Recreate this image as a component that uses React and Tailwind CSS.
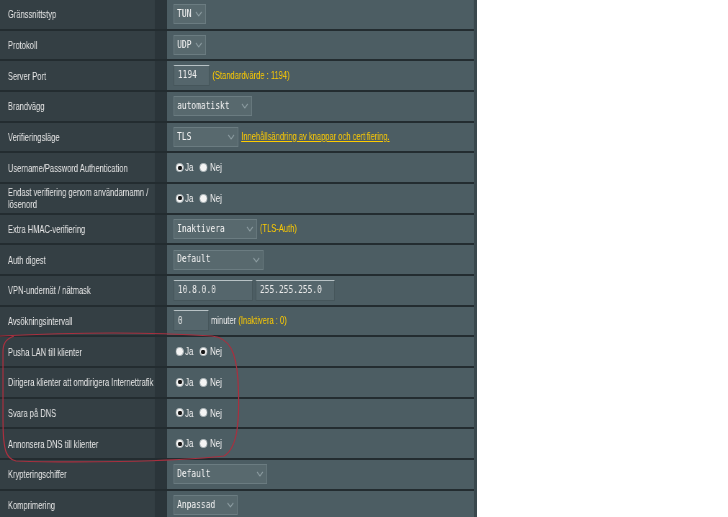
import React from "react";

function Chevron() {
  return (
    <svg width="10" height="6" viewBox="0 0 10 6" className="shrink-0">
      <path d="M1 1 L5 5 L9 1" fill="none" stroke="#8e9ea3" strokeWidth="1.2" />
    </svg>
  );
}

function Select({ className, children }) {
  return (
    <div
      className={
        "h-[20px] flex items-center justify-between pl-[4px] pr-[4px] bg-[#58696e] border border-[#6b7c81] text-[#f4f4f4] text-[11px] font-['DejaVu_Sans_Mono',monospace] " +
        className
      }
    >
      <span>{children}</span>
      <Chevron />
    </div>
  );
}

function Input({ className, children }) {
  return (
    <div
      className={
        "h-[21px] flex items-center pl-[5px] bg-[#55666c] border border-[#46565b] border-t-[#b8c2c5] text-[#ececec] text-[11px] font-['DejaVu_Sans_Mono',monospace] " +
        className
      }
    >
      {children}
    </div>
  );
}

function Hint({ children, className = "" }) {
  return <span className={"text-[10.5px] text-[#ffcc00] " + className}>{children}</span>;
}

function Radio({ checked }) {
  return (
    <span className="inline-flex w-[11px] h-[9px] rounded-full bg-[#f4f4f4] border border-[#a9b3b6] items-center justify-center">
      {checked && <span className="w-[6px] h-[4px] rounded-full bg-[#151515]" />}
    </span>
  );
}

function Radios({ ja }) {
  return (
    <div className="flex items-center ml-[3px] text-[11px] text-[#f0f0f0]">
      <Radio checked={ja} />
      <span className="ml-[2px]">Ja</span>
      <span className="ml-[8px] flex items-center">
        <Radio checked={!ja} />
      </span>
      <span className="ml-[4px]">Nej</span>
    </div>
  );
}

const rows = [
  { label: "Gränssnittstyp", content: <Select className="w-[45px]">TUN</Select> },
  { label: "Protokoll", content: <Select className="w-[45px]">UDP</Select> },
  {
    label: "Server Port",
    content: (
      <>
        <Input className="w-[50px]">1194</Input>
        <Hint className="ml-[4px]">(Standardvärde : 1194)</Hint>
      </>
    ),
  },
  { label: "Brandvägg", content: <Select className="w-[109px]">automatiskt</Select> },
  {
    label: "Verifieringsläge",
    content: (
      <>
        <Select className="w-[90px]">TLS</Select>
        <Hint className="ml-[4px] underline">Innehållsändring av knappar och certifiering.</Hint>
      </>
    ),
  },
  { label: "Username/Password Authentication", content: <Radios ja /> },
  { label: "Endast verifiering genom användarnamn / lösenord", content: <Radios ja /> },
  {
    label: "Extra HMAC-verifiering",
    content: (
      <>
        <Select className="w-[116px]">Inaktivera</Select>
        <Hint className="ml-[4px]">(TLS-Auth)</Hint>
      </>
    ),
  },
  { label: "Auth digest", content: <Select className="w-[125px]">Default</Select> },
  {
    label: "VPN-undernät / nätmask",
    content: (
      <>
        <Input className="w-[110px]">10.8.0.0</Input>
        <Input className="w-[110px] ml-[4px]">255.255.255.0</Input>
      </>
    ),
  },
  {
    label: "Avsökningsintervall",
    content: (
      <>
        <Input className="w-[49px]">0</Input>
        <span className="ml-[3px] text-[10.5px] text-[#eeeeee]">minuter</span>
        <Hint className="ml-[3px]">(Inaktivera : 0)</Hint>
      </>
    ),
  },
  { label: "Pusha LAN till klienter", content: <Radios ja={false} /> },
  { label: "Dirigera klienter att omdirigera Internettrafik", content: <Radios ja /> },
  { label: "Svara på DNS", content: <Radios ja /> },
  { label: "Annonsera DNS till klienter", content: <Radios ja /> },
  { label: "Krypteringschiffer", content: <Select className="w-[130px]">Default</Select> },
  { label: "Komprimering", content: <Select className="w-[89px]">Anpassad</Select> },
];

export default function App() {
  return (
    <div className="relative w-[728px] h-[517px] overflow-hidden bg-white font-['Liberation_Sans',Arial,sans-serif]">
      <div className="w-[1011px] origin-top-left scale-x-[0.72] will-change-transform">
        <div className="w-[662px] flex flex-col border-r-4 border-r-[#3a484d]">
          {rows.map((r, i) => (
            <div key={i} className="flex h-[30.67px] shrink-0 border-b-2 border-b-[#232c30]">
              <div className="w-[232px] shrink-0 flex items-center pl-[11px] pr-[17px] bg-[linear-gradient(to_right,#343f44_215px,#2b353a_215px)]">
                <span className="text-[10.5px] leading-[12px] text-[#e8e8e8]">{r.label}</span>
              </div>
              <div className="flex-1 flex items-center pl-[9px] bg-[#4c5d63]">{r.content}</div>
            </div>
          ))}
        </div>
      </div>
      <svg
        width="728"
        height="517"
        viewBox="0 0 728 517"
        className="absolute inset-0 pointer-events-none"
      >
        <path
          d="M 0 336 C 40 334, 120 330, 212 336 C 230 338, 236 352, 238 380 C 240 420, 238 448, 224 456 C 170 462, 70 463, 16 461 C 6 459, 3 450, 3 420 L 3 352 C 3 343, 6 339, 14 336"
          fill="none"
          stroke="#a8303f"
          strokeWidth="1.2"
        />
      </svg>
    </div>
  );
}
